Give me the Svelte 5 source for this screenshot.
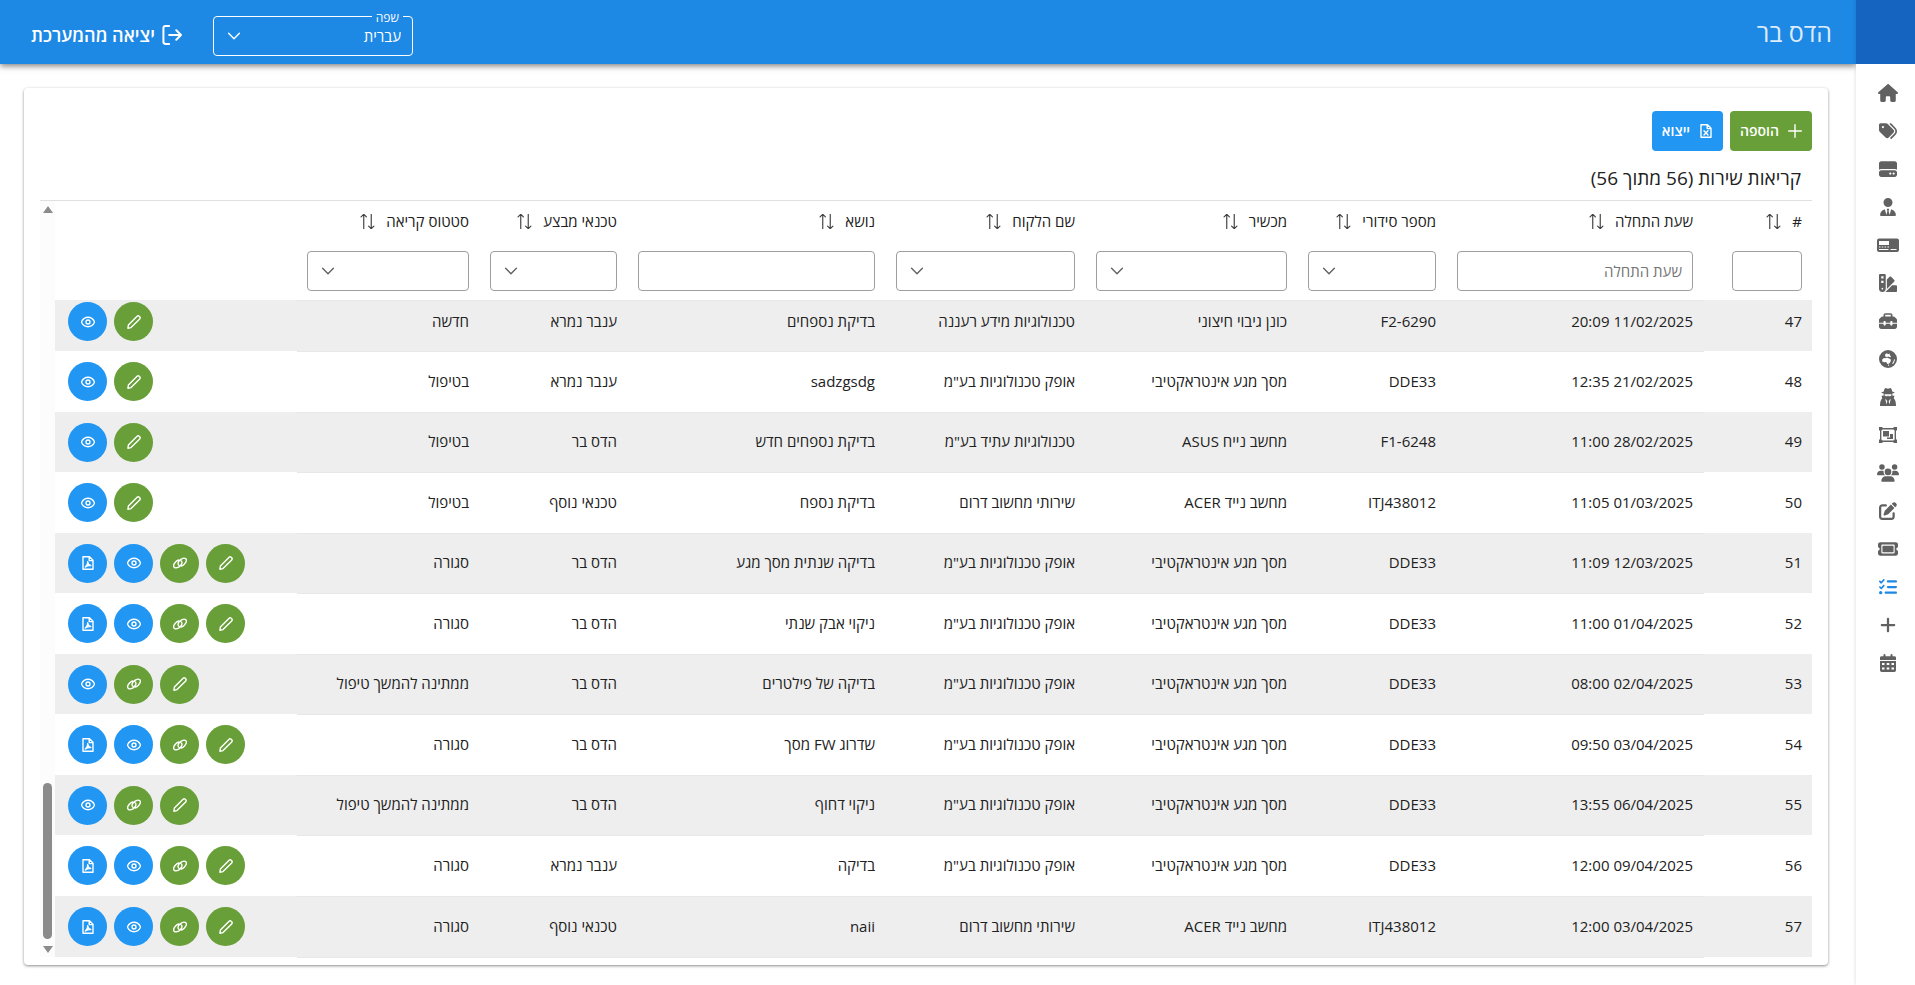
<script>
  const menu = [
    { name: 'בית', w: 20, h: 18, box: '0 0 576 512', d: 'M575.8 255.5c0 18-15 32.1-32 32.1h-32l.7 160.2c0 2.7-.2 5.4-.5 8.1V472c0 22.1-17.9 40-40 40H392c-22.1 0-40-17.9-40-40V384c0-17.7-14.3-32-32-32H256c-17.7 0-32 14.3-32 32v88c0 22.1-17.9 40-40 40H104c-22.1 0-40-17.9-40-40V287.6H32c-18 0-32-14-32-32.1c0-9 3-17 10-24L266.4 8c7-7 15-8 22-8s15 2 21 7L564.8 231.5c8 7 12 15 11 24z' },
    { name: 'תגיות', w: 18, h: 18, box: '0 0 512 512', d: 'M345 39.1L472.8 168.4c52.4 53 52.4 138.2 0 191.2L360.8 472.9c-9.3 9.4-24.5 9.5-33.9 .2s-9.5-24.5-.2-33.9L438.6 325.9c33.9-34.3 33.9-89.4 0-123.7L310.9 72.9c-9.3-9.4-9.2-24.6 .2-33.9s24.6-9.2 33.9 .2zM0 229.5V80C0 53.5 21.5 32 48 32H197.5c17 0 33.3 6.7 45.3 18.7l168 168c25 25 25 65.5 0 90.5L277.3 442.7c-25 25-65.5 25-90.5 0l-168-168C6.7 262.7 0 246.5 0 229.5zM144 144a32 32 0 1 0 -64 0 32 32 0 1 0 64 0z' },
    { name: 'ציוד', w: 18, h: 18, box: '0 0 512 512', d: 'M0 96C0 60.7 28.7 32 64 32H448c35.3 0 64 28.7 64 64V280.4c-17-15.2-39.4-24.4-64-24.4H64c-24.6 0-47 9.2-64 24.4V96zM64 288H448c35.3 0 64 28.7 64 64v64c0 35.3-28.7 64-64 64H64c-35.3 0-64-28.7-64-64V352c0-35.3 28.7-64 64-64zM320 416a32 32 0 1 0 0-64 32 32 0 1 0 0 64zm128-32a32 32 0 1 0 -64 0 32 32 0 1 0 64 0z' },
    { name: 'לקוחות', w: 16, h: 18, box: '0 0 448 512', d: 'M96 128a128 128 0 1 0 256 0A128 128 0 1 0 96 128zm94.5 200.2l18.6 31L175.8 483.1l-36-146.9c-2-8.1-9.8-13.4-17.9-11.3C51.9 342.4 0 405.8 0 481.3c0 17 13.8 30.7 30.7 30.7H417.3c17 0 30.7-13.8 30.7-30.7c0-75.5-51.9-138.9-121.9-156.4c-8.1-2-15.9 3.3-17.9 11.3l-36 146.9L238.9 359.2l18.6-31c6.4-10.7-1.3-24.2-13.7-24.2H204.3c-12.4 0-20.1 13.6-13.7 24.2z' },
    { name: 'מכשירים', w: 22, h: 18, box: '0 0 22 18', d: 'M2 2.5H20a2 2 0 0 1 2 2V14a2 2 0 0 1-2 2H2a2 2 0 0 1-2-2V4.5a2 2 0 0 1 2-2zM2 5V9H12V5zM2 10.5v1h1.5v-1zm2.8 0v1h1.5v-1zm2.8 0v1h1.5v-1zm2.8 0v1h1.6v-1zM2 13v1H11.5v-1zm11.5 0v1H19.5v-1z' },
    { name: 'דגמים', w: 18, h: 18, box: '0 0 512 512', d: 'M0 32C0 14.3 14.3 0 32 0H160c17.7 0 32 14.3 32 32V416c0 53-43 96-96 96s-96-43-96-96V32zM223.6 425.9c.3-3.3 .4-6.6 .4-9.9V154l75.4-75.4c12.5-12.5 32.8-12.5 45.3 0l90.5 90.5c12.5 12.5 12.5 32.8 0 45.3L223.6 425.9zM182.8 512l192-192H480c17.7 0 32 14.3 32 32V480c0 17.7-14.3 32-32 32H182.8zM128 64H64v64h64V64zM64 192v64h64V192H64zM96 440a24 24 0 1 0 0-48 24 24 0 1 0 0 48z' },
    { name: 'כלים', w: 18, h: 18, box: '0 0 512 512', d: 'M176 88v40H336V88c0-4.4-3.6-8-8-8H184c-4.4 0-8 3.6-8 8zm-48 40V88c0-30.9 25.1-56 56-56H328c30.9 0 56 25.1 56 56v40h28.1c12.7 0 24.9 5.1 33.9 14.1l51.9 51.9c9 9 14.1 21.2 14.1 33.9V304H384V288c0-17.7-14.3-32-32-32s-32 14.3-32 32v16H192V288c0-17.7-14.3-32-32-32s-32 14.3-32 32v16H0V227.9c0-12.7 5.1-24.9 14.1-33.9l51.9-51.9c9-9 21.2-14.1 33.9-14.1H128zM0 416V336H128v16c0 17.7 14.3 32 32 32s32-14.3 32-32V336H320v16c0 17.7 14.3 32 32 32s32-14.3 32-32V336H512v80c0 35.3-28.7 64-64 64H64c-35.3 0-64-28.7-64-64z' },
    { name: 'אזורים', w: 18, h: 18, box: '0 0 18 18', d: 'M9 0A9 9 0 1 0 9 18A9 9 0 1 0 9 0zM6.2 4.2L8 3.2l1 1 1.5-.6.4 1.6 1.2 1.4-1 .6-2-.8-1 .7-2-.6zM3.2 9.5L5 8l1.6.3L8 7.5l1.5.8L11.5 9l.4 2-1.6 2.4-1.8.5-1.4-1.8-2 .2-1.9-.8zM13.2 13.5l1.3-2.3.7-2.2.7.7-.6 2.4-1.3 2zM9 14.8l1-.2.2 1-.9.4z' },
    { name: 'טכנאים', w: 16, h: 18, box: '0 0 16 18', d: 'M5.5 0l2.5.8 2.5-.8c1 .4 1.4 2 1.7 3.4l2.3.8c.4.6-1 1-2.2 1.3l.2 2.2h2l-.8 2.5 1 1.4c.9 1.4 1.3 3.600 1.300 6.400H0c0-2.800.4-5 1.300-6.400l1-1.400L1.500 7.700h2l.2-2.200C2.500 5.200 1.100 4.800 1.500 4.200l2.300-.8C4.100 2 4.500.4 5.500 0zM4.500 6.300v1l1.200 1 1.500-.1.800-.8.8.8 1.500.1 1.200-1v-1zM5.200 10.500l1.300 6 .8-3.500zm5.600 0l-1.300 6-.8-3.500z' },
    { name: 'קבוצות', w: 18, h: 16, box: '0 0 18 16', d: 'M0 0H3.5V1H14.5V0H18V3.5H17V12.5H18V16H14.5V15H3.5V16H0V12.5H1V3.5H0zM3.2 2.4V3.2H2.4V12.8H3.2V13.6H14.8V12.8H15.6V3.2H14.8V2.4zM4 4H10V9.5H4zM11 7H14V12H8V10.5H11z' },
    { name: 'משתמשים', w: 22, h: 18, box: '0 0 640 512', d: 'M144 0a80 80 0 1 1 0 160A80 80 0 1 1 144 0zM512 0a80 80 0 1 1 0 160A80 80 0 1 1 512 0zM0 298.7C0 239.8 47.8 192 106.7 192h42.7c15.9 0 31 3.5 44.6 9.7c-1.3 7.2-1.9 14.7-1.9 22.3c0 38.2 16.8 72.5 43.3 96H21.3C9.6 320 0 310.4 0 298.7zM405.3 320c26.6-23.5 43.3-57.8 43.3-96c0-7.6-.7-15-1.9-22.3c13.6-6.3 28.7-9.7 44.6-9.7h42.7C592.2 192 640 239.8 640 298.7c0 11.8-9.6 21.3-21.3 21.3H405.3zM224 224a96 96 0 1 1 192 0 96 96 0 1 1 -192 0zM128 485.3C128 411.7 187.7 352 261.3 352H378.7C452.3 352 512 411.7 512 485.3c0 14.7-11.9 26.7-26.7 26.7H154.7c-14.7 0-26.7-11.9-26.7-26.7z' },
    { name: 'עריכה', w: 18, h: 18, box: '0 0 512 512', d: 'M471.6 21.7c-21.9-21.9-57.3-21.9-79.2 0L362.3 51.7l97.9 97.9 30.1-30.1c21.9-21.9 21.9-57.3 0-79.2L471.6 21.7zm-299.2 220c-6.1 6.1-10.8 13.6-13.5 21.9l-29.6 88.8c-2.9 8.6-.6 18.1 5.8 24.6s15.9 8.7 24.6 5.8l88.8-29.6c8.2-2.7 15.7-7.4 21.9-13.5L437.7 172.3 339.7 74.3 172.4 241.7zM96 64C43 64 0 107 0 160V416c0 53 43 96 96 96H352c53 0 96-43 96-96V320c0-17.7-14.3-32-32-32s-32 14.3-32 32v96c0 17.7-14.3 32-32 32H96c-17.7 0-32-14.3-32-32V160c0-17.7 14.3-32 32-32h96c17.7 0 32-14.3 32-32s-14.3-32-32-32H96z' },
    { name: 'כרטיסים', w: 20, h: 18, box: '0 0 576 512', d: 'M64 64C28.7 64 0 92.7 0 128v64c0 8.8 7.4 15.7 15.7 18.6C34.5 217.1 48 235 48 256s-13.5 38.9-32.3 45.4C7.4 304.3 0 311.2 0 320v64c0 35.3 28.7 64 64 64H512c35.3 0 64-28.7 64-64V320c0-8.8-7.4-15.7-15.7-18.6C541.5 294.9 528 277 528 256s13.5-38.9 32.3-45.4c8.3-2.9 15.7-9.8 15.7-18.6V128c0-35.3-28.7-64-64-64H64zM128 176V336c0 8.8 7.2 16 16 16H432c8.8 0 16-7.2 16-16V176c0-8.8-7.2-16-16-16H144c-8.8 0-16 7.2-16 16zM96 160c0-17.7 14.3-32 32-32H448c17.7 0 32 14.3 32 32V352c0 17.7-14.3 32-32 32H128c-17.7 0-32-14.3-32-32V160z' },
    { name: 'קריאות שירות', active: true, w: 18, h: 18, box: '0 0 512 512', d: 'M152.1 38.2c9.9 8.9 10.7 24 1.8 33.9l-72 80c-4.4 4.9-10.6 7.8-17.2 7.9s-12.9-2.4-17.6-7L7 113C-2.3 103.6-2.3 88.4 7 79s24.6-9.4 33.9 0l22.1 22.1 55.1-61.2c8.9-9.9 24-10.7 33.9-1.8zm0 160c9.9 8.9 10.7 24 1.8 33.9l-72 80c-4.4 4.9-10.6 7.8-17.2 7.9s-12.9-2.4-17.6-7L7 273c-9.4-9.4-9.4-24.6 0-33.9s24.6-9.4 33.9 0l22.1 22.1 55.1-61.2c8.9-9.9 24-10.7 33.9-1.8zM224 96c0-17.7 14.3-32 32-32H480c17.7 0 32 14.3 32 32s-14.3 32-32 32H256c-17.7 0-32-14.3-32-32zm0 160c0-17.7 14.3-32 32-32H480c17.7 0 32 14.3 32 32s-14.3 32-32 32H256c-17.7 0-32-14.3-32-32zM160 416c0-17.7 14.3-32 32-32H480c17.7 0 32 14.3 32 32s-14.3 32-32 32H192c-17.7 0-32-14.3-32-32zM48 368a48 48 0 1 1 0 96 48 48 0 1 1 0-96z' },
    { name: 'חדש', w: 16, h: 18, box: '0 0 448 512', d: 'M256 80c0-17.7-14.3-32-32-32s-32 14.3-32 32V224H48c-17.7 0-32 14.3-32 32s14.3 32 32 32H192V432c0 17.7 14.3 32 32 32s32-14.3 32-32V288H400c17.7 0 32-14.3 32-32s-14.3-32-32-32H256V80z' },
    { name: 'יומן', w: 16, h: 18, box: '0 0 16 18', d: 'M4.5 0a1 1 0 0 1 1 1V2.2H10.5V1a1 1 0 0 1 2 0V2.2H14.3A1.7 1.7 0 0 1 16 4V6H0V4A1.7 1.7 0 0 1 1.7 2.2H3.5V1a1 1 0 0 1 1-1zM0 7H16V16.3A1.7 1.7 0 0 1 14.3 18H1.7A1.7 1.7 0 0 1 0 16.3zM2 9v2H4.5V9zm4.7 0v2H9.3V9zm4.8 0v2H14V9zM2 13.5v2H4.5v-2zm4.7 0v2H9.3v-2zm4.8 0v2H14v-2z' }
  ];

  const columns = [
    { key: 'id', label: '#', width: 108, filter: 'text' },
    { key: 'start', label: 'שעת התחלה', width: 257, filter: 'text', placeholder: 'שעת התחלה' },
    { key: 'serial', label: 'מספר סידורי', width: 149, filter: 'select' },
    { key: 'device', label: 'מכשיר', width: 212, filter: 'select' },
    { key: 'customer', label: 'שם הלקוח', width: 200, filter: 'select' },
    { key: 'subject', label: 'נושא', width: 258, filter: 'text' },
    { key: 'technician', label: 'טכנאי מבצע', width: 148, filter: 'select' },
    { key: 'status', label: 'סטטוס קריאה', width: 183, filter: 'select' }
  ];

  const screen = 'מסך מגע אינטראקטיבי';
  const ofek = 'אופק טכנולוגיות בע"מ';
  const south = 'שירותי מחשוב דרום';
  const open = ['edit', 'view'];
  const waiting = ['edit', 'link', 'view'];
  const closed = ['edit', 'link', 'view', 'pdf'];

  const calls = [
    { id: 47, start: '11/02/2025 20:09', serial: 'F2-6290', device: 'כונן גיבוי חיצוני', customer: 'טכנולוגיות מידע רעננה', subject: 'בדיקת נספחים', technician: 'ענבר נמרא', status: 'חדשה', actions: open },
    { id: 48, start: '21/02/2025 12:35', serial: 'DDE33', device: screen, customer: ofek, subject: 'sadzgsdg', technician: 'ענבר נמרא', status: 'בטיפול', actions: open },
    { id: 49, start: '28/02/2025 11:00', serial: 'F1-6248', device: 'מחשב נייח ASUS', customer: 'טכנולוגיות עתיד בע"מ', subject: 'בדיקת נספחים חדש', technician: 'הדס בר', status: 'בטיפול', actions: open },
    { id: 50, start: '01/03/2025 11:05', serial: 'ITJ438012', device: 'מחשב נייד ACER', customer: south, subject: 'בדיקת נספח', technician: 'טכנאי נוסף', status: 'בטיפול', actions: open },
    { id: 51, start: '12/03/2025 11:09', serial: 'DDE33', device: screen, customer: ofek, subject: 'בדיקה שנתית מסך מגע', technician: 'הדס בר', status: 'סגורה', actions: closed },
    { id: 52, start: '01/04/2025 11:00', serial: 'DDE33', device: screen, customer: ofek, subject: 'ניקוי אבק שנתי', technician: 'הדס בר', status: 'סגורה', actions: closed },
    { id: 53, start: '02/04/2025 08:00', serial: 'DDE33', device: screen, customer: ofek, subject: 'בדיקה של פילטרים', technician: 'הדס בר', status: 'ממתינה להמשך טיפול', actions: waiting },
    { id: 54, start: '03/04/2025 09:50', serial: 'DDE33', device: screen, customer: ofek, subject: 'שדרוג FW מסך', technician: 'הדס בר', status: 'סגורה', actions: closed },
    { id: 55, start: '06/04/2025 13:55', serial: 'DDE33', device: screen, customer: ofek, subject: 'ניקוי דחוף', technician: 'הדס בר', status: 'ממתינה להמשך טיפול', actions: waiting },
    { id: 56, start: '09/04/2025 12:00', serial: 'DDE33', device: screen, customer: ofek, subject: 'בדיקה', technician: 'ענבר נמרא', status: 'סגורה', actions: closed },
    { id: 57, start: '03/04/2025 12:00', serial: 'ITJ438012', device: 'מחשב נייד ACER', customer: south, subject: 'naii', technician: 'טכנאי נוסף', status: 'סגורה', actions: closed }
  ];

  // line icons, 14 x 14
  const file = 'M2 .8H8.5L12 4.3V13.2H2zM8.200 .8V4.600H12';
  const icons = {
    edit: 'M.9 13.200l.5-3.100L10.100 1.300a1.500 1.500 0 0 1 2.100 0l.5.5a1.500 1.500 0 0 1 0 2.100L4 12.600z',
    link: 'M8.100 4.800C9.600 6 9 8 7.300 9.700C5.400 11.700 2.500 12.500 1.200 11.200S.9 7.700 2.800 5.700C3.700 4.800 4.700 4.200 5.600 3.900M5.900 9.200C4.400 8 5 6 6.700 4.300C8.600 2.300 11.500 1.500 12.800 2.800S13.100 6.300 11.200 8.300C10.300 9.200 9.300 9.800 8.400 10.100',
    view: 'M.4 7C1.800 4 4.200 2.300 7 2.300S12.200 4 13.600 7C12.200 10 9.800 11.700 7 11.700S1.800 10 .4 7zM9 7A2 2 0 1 1 5 7A2 2 0 1 1 9 7z',
    pdf: file + 'M4.300 11C6 10 6.900 8 6.700 5.800C7 8 8 9.300 9.800 9.500C7.800 9.200 6 9.800 4.300 11',
    excel: file + 'M5 6.800L9 11M9 6.800L5 11',
    plus: 'M7 .7V13.300M.7 7H13.300',
    chevron: 'M1.600 4.300L7 9.700L12.400 4.300',
    sort: 'M3.500 13.700V.5M1 2.700L3.500 .3L6 2.700M10.500 .3V13.500M8 11.300L10.500 13.700L13 11.300',
    exit: 'M5 .7H2.500A1.500 1.500 0 0 0 1 2.200V11.800A1.500 1.500 0 0 0 2.500 13.300H5M5 7H13.300M10 3.700L13.300 7L10 10.300'
  };

  const actionNames = { edit: 'עריכה', link: 'קישור', view: 'צפייה', pdf: 'PDF' };
</script>

{#snippet icon(name, size)}
  <svg class="line-icon" width={size} height={size} viewBox="0 0 14 14" aria-hidden="true">
    <path d={icons[name]} />
  </svg>
{/snippet}

<div class="app" dir="rtl">
  <nav class="sidebar">
    <div class="brand"></div>
    <div class="menu">
      {#each menu as item}
        <a href="#menu" class:active={item.active} aria-label={item.name}>
          <svg width={item.w} height={item.h} viewBox={item.box} fill-rule="evenodd">
            <path d={item.d} />
          </svg>
        </a>
      {/each}
    </div>
  </nav>

  <div class="content">
    <header>
      <span class="user">הדס בר</span>
      <div class="tools">
        <div class="language">
          <label for="language">שפה</label>
          <select id="language">
            <option>עברית</option>
          </select>
          <span class="arrow">{@render icon('chevron', 14)}</span>
        </div>
        <button class="logout">{@render icon('exit', 20)}יציאה מהמערכת</button>
      </div>
    </header>

    <main>
      <section class="card">
        <div class="toolbar">
          <button class="add">{@render icon('plus', 14)}הוספה</button>
          <button class="export">{@render icon('excel', 14)}ייצוא</button>
        </div>
        <h1>קריאות שירות (56 מתוך 56)</h1>

        <div class="grid">
          <table>
            <colgroup>
              {#each columns as col}
                <col style="width: {col.width}px" />
              {/each}
              <col style="width: 242px" />
            </colgroup>
            <thead>
              <tr class="labels">
                {#each columns as col}
                  <th><button class="sort">{col.label}{@render icon('sort', 15)}</button></th>
                {/each}
                <th></th>
              </tr>
              <tr class="filters">
                {#each columns as col}
                  <td>
                    {#if col.filter === 'select'}
                      <div class="filter">
                        <select aria-label={col.label}><option></option></select>
                        <span class="arrow">{@render icon('chevron', 14)}</span>
                      </div>
                    {:else}
                      <input
                        class:short={col.key === 'id'}
                        type="text"
                        aria-label={col.label}
                        placeholder={col.placeholder}
                      />
                    {/if}
                  </td>
                {/each}
                <td></td>
              </tr>
            </thead>
            <tbody>
              {#each calls as call}
                <tr>
                  {#each columns as col}
                    <td class:ruled={col.key !== 'id'}>{call[col.key]}</td>
                  {/each}
                  <td class="actions">
                    <div>
                      {#each call.actions as action}
                        <button class={action} aria-label={actionNames[action]}>
                          {@render icon(action, 14)}
                        </button>
                      {/each}
                    </div>
                  </td>
                </tr>
              {/each}
            </tbody>
          </table>
          <div class="scrollbar">
            <span class="up"></span>
            <span class="thumb"></span>
            <span class="down"></span>
          </div>
        </div>
      </section>
    </main>
  </div>
</div>

<style>
  :global(body) {
    margin: 0;
    background: #fff;
  }

  .app {
    display: flex;
    min-height: 100vh;
    font-family: "Open Sans", "Noto Sans", sans-serif;
    font-size: 15px;
    line-height: 20px;
    color: #212121;
  }

  .app * {
    box-sizing: border-box;
  }

  button,
  input,
  select {
    margin: 0;
    font: inherit;
    color: inherit;
  }

  button {
    padding: 0;
    border: 0;
    background: none;
    cursor: pointer;
  }

  .line-icon {
    flex: none;
    fill: none;
    stroke: currentColor;
    stroke-width: 1.4;
    stroke-linecap: round;
    stroke-linejoin: round;
  }

  /* sidebar */

  .sidebar {
    flex: none;
    width: 59px;
    background: #fff;
    box-shadow: 0 0 4px rgba(0, 0, 0, 0.15);
    z-index: 1;
  }

  .brand {
    height: 64px;
    background: #1565c0;
  }

  .menu {
    padding: 10px 0 0 5px;
  }

  .menu a {
    display: flex;
    align-items: center;
    justify-content: center;
    height: 38px;
    color: #616161;
  }

  .menu a.active {
    color: #1e88e5;
  }

  .menu svg {
    fill: currentColor;
  }

  /* header */

  .content {
    flex: 1;
    min-width: 0;
  }

  header {
    display: flex;
    align-items: center;
    justify-content: space-between;
    height: 64px;
    padding: 0 24px 0 31px;
    background: #1e88e5;
    color: #fff;
    box-shadow: 0 2px 6px rgba(0, 0, 0, 0.5);
  }

  .user {
    font-size: 25px;
    line-height: 32px;
    color: #dcecfb;
  }

  .tools {
    display: flex;
    align-items: center;
    gap: 31px;
    padding-top: 7px;
  }

  .language,
  .filter {
    position: relative;
  }

  .language {
    width: 200px;
    font-size: 15px;
  }

  .language label {
    position: absolute;
    top: -6px;
    right: 10px;
    padding: 0 4px;
    background: #1e88e5;
    font-size: 12px;
    line-height: 16px;
  }

  select {
    display: block;
    width: 100%;
    height: 40px;
    padding: 0 11px;
    border: 1px solid #9e9e9e;
    border-radius: 4px;
    background: transparent;
    appearance: none;
  }

  .language select {
    border-color: #fff;
  }

  .arrow {
    position: absolute;
    top: 13px;
    left: 14px;
    height: 14px;
    line-height: 0;
    color: #616161;
    pointer-events: none;
  }

  .language .arrow {
    color: #fff;
  }

  .logout {
    display: flex;
    align-items: center;
    gap: 7px;
    padding-bottom: 2px;
    font-size: 18px;
    font-weight: 600;
  }

  /* card */

  main {
    padding: 24px 28px 20px 24px;
  }

  .card {
    padding: 23px 16px 8px;
    border-radius: 4px;
    box-shadow: 0 1px 3px rgba(0, 0, 0, 0.45);
  }

  .toolbar {
    display: flex;
    gap: 7px;
  }

  .toolbar button {
    display: flex;
    align-items: center;
    gap: 9px;
    height: 40px;
    padding: 0 10px;
    border-radius: 4px;
    color: #fff;
    font-size: 14px;
    font-weight: 600;
  }

  .add {
    background: #689f38;
  }

  .toolbar .export {
    background: #2196f3;
  }

  h1 {
    margin: 0;
    padding: 15px 11px 10px;
    font-size: 19px;
    font-weight: 400;
    line-height: 24px;
  }

  .grid {
    display: flex;
    border-top: 1px solid #e0e0e0;
  }

  table {
    flex: 1;
    width: 100%;
    table-layout: fixed;
    border-collapse: separate;
    border-spacing: 0;
  }

  th,
  td {
    padding: 0 11px 0 10px;
    text-align: right;
    white-space: nowrap;
  }

  th:first-child,
  td:first-child {
    padding-right: 10px;
  }

  .labels th {
    height: 40px;
    font-weight: 400;
  }

  .sort {
    display: flex;
    align-items: center;
    gap: 11px;
  }

  .sort .line-icon {
    color: #424242;
    stroke-width: 1.1;
  }

  .filters td {
    height: 59px;
  }

  input {
    display: block;
    width: 100%;
    height: 40px;
    padding: 0 10px;
    border: 1px solid #9e9e9e;
    border-radius: 4px;
    background: #fff;
  }

  input.short {
    width: 70px;
  }

  input::placeholder {
    color: #757575;
  }

  tbody td {
    height: 60px;
    padding-bottom: 2px;
  }

  tbody tr:nth-child(even) td,
  tbody tr:last-child td {
    height: 61px;
  }

  tbody tr:nth-child(odd) td {
    background: #eee;
  }

  tbody tr:nth-child(odd) .ruled {
    box-shadow: inset 0 1px #e7e7e7, 0 1px #e7e7e7;
  }

  tbody .actions {
    padding-bottom: 0;
  }

  /* the top row is partly scrolled under the head */
  tbody tr:first-child td {
    height: 51px;
    padding-bottom: 10px;
  }

  tbody tr:first-child .actions {
    padding-bottom: 8px;
  }

  .actions div {
    display: flex;
    justify-content: flex-end;
    gap: 7px;
    padding-left: 3px;
  }

  .actions button {
    display: flex;
    align-items: center;
    justify-content: center;
    width: 39px;
    height: 39px;
    border-radius: 50%;
    background: #2196f3;
    color: #fff;
  }

  .actions .edit,
  .actions .link {
    background: #689f38;
  }

  /* scrollbar */

  .scrollbar {
    display: flex;
    flex: none;
    flex-direction: column;
    align-items: center;
    width: 15px;
    padding: 5px 0 4px;
    background: #fcfcfc;
  }

  .up,
  .down {
    border: solid transparent;
    border-width: 0 5px 7px;
    border-bottom-color: #8b8b8b;
  }

  .down {
    border-width: 7px 5px 0;
    border-top-color: #8b8b8b;
  }

  .thumb {
    width: 9px;
    height: 156px;
    margin: auto 0 7px;
    border-radius: 5px;
    background: #8b8b8b;
  }
</style>
